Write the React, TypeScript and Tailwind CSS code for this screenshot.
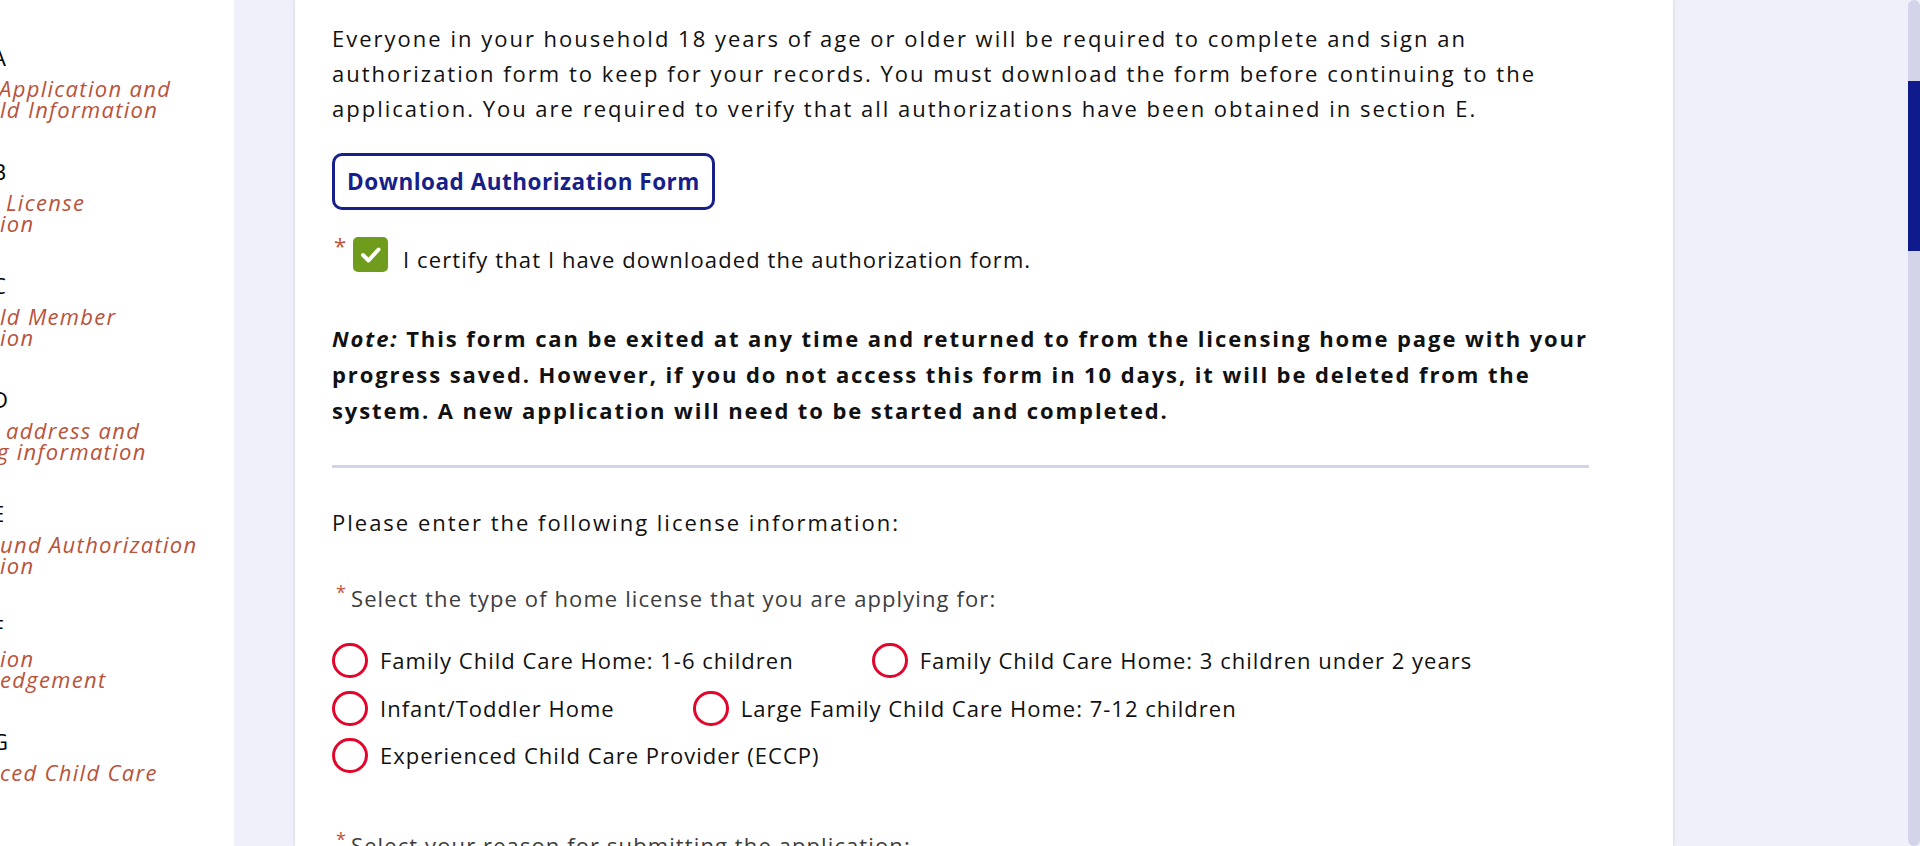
const sections = [
  { letter: "A", lines: [{ t: "Application and", c: "-ml-[1px]" }, { t: "ld Information", c: "ml-0" }] },
  { letter: "B", lines: [{ t: "License", c: "pl-[6px]" }, { t: "ion", c: "ml-0" }] },
  { letter: "C", lines: [{ t: "ld Member", c: "ml-0" }, { t: "ion", c: "ml-0" }] },
  { letter: "D", lines: [{ t: "address and", c: "pl-[6px]" }, { t: "g information", c: "-ml-[3px]" }] },
  { letter: "E", lines: [{ t: "und Authorization", c: "ml-0" }, { t: "ion", c: "ml-0" }] },
  { letter: "F", lines: [{ t: "ion", c: "ml-0" }, { t: "edgement", c: "ml-0" }] },
  { letter: "G", lines: [{ t: "ced Child Care", c: "ml-0" }] },
]

const licenseTypes = [
  "Family Child Care Home: 1-6 children",
  "Family Child Care Home: 3 children under 2 years",
  "Infant/Toddler Home",
  "Large Family Child Care Home: 7-12 children",
  "Experienced Child Care Provider (ECCP)",
]

function Radio({ label }: { label: string }) {
  return (
    <label className="flex items-center gap-[12px] h-[35px] whitespace-nowrap">
      <span className="w-[36px] h-[35px] rounded-full border-[3px] border-[#e3062c] bg-white shrink-0" />
      <span className="text-[#111]">{label}</span>
    </label>
  )
}

export default function App() {
  return (
    <div className="flex h-[846px] w-full overflow-hidden bg-[#eff0f9] font-['Open_Sans',sans-serif] text-[22px] text-[#111]">
      {/* Section nav */}
      <aside className="w-[234px] shrink-0 bg-white overflow-hidden pt-[46px] tracking-[1.3px]">
        {sections.map((s) => (
          <div key={s.letter} className="h-[114px]">
            <div className="leading-[22px] text-black -ml-[8px]">{s.letter}</div>
            <div className="mt-[10px] italic leading-[20.7px] text-[#b8533c] whitespace-nowrap">
              {s.lines.map((l) => (
                <div key={l.t} className={l.c}>{l.t}</div>
              ))}
            </div>
          </div>
        ))}
      </aside>

      {/* Main */}
      <main className="flex-1 pl-[61px]">
        <div className="w-[1378px] h-full bg-white shadow-[0_0_3px_rgba(20,20,80,0.18)] pl-[37px] pt-[21px]">
          <div className="w-[1257px]">
            <p className="leading-[35px] tracking-[2px] whitespace-nowrap">
              Everyone in your household 18 years of age or older will be required to complete and sign an<br />
              authorization form to keep for your records. You must download the form before continuing to the<br />
              application. You are required to verify that all authorizations have been obtained in section E.
            </p>

            <button className="mt-[27px] h-[57px] w-[383px] rounded-[10px] border-[3px] border-[#161f8a] text-[#161f8a] text-[22.5px] tracking-[0.5px] font-bold flex items-center justify-center">
              Download Authorization Form
            </button>

            <div className="mt-[27px] flex items-start tracking-[1.1px]">
              <span className="text-[#c0533a] text-[22px] leading-[22px] -mt-[3px] ml-[2px] w-[19px]">*</span>
              <span className="w-[35px] h-[35px] rounded-[5px] bg-[#6f9c1c] flex items-center justify-center shrink-0">
                <svg width="35" height="35" viewBox="0 0 35 35" fill="none">
                  <polyline points="10,18 15.5,23.5 25.5,12.5" stroke="white" strokeWidth="4" strokeLinecap="round" strokeLinejoin="round" />
                </svg>
              </span>
              <span className="ml-[15px] mt-[5px] leading-[35px] whitespace-nowrap">I certify that I have downloaded the authorization form.</span>
            </div>

            <p className="mt-[43px] leading-[36px] font-bold tracking-[1.9px] whitespace-nowrap">
              <em>Note:</em> This form can be exited at any time and returned to from the licensing home page with your<br />
              progress saved. However, if you do not access this form in 10 days, it will be deleted from the<br />
              system. A new application will need to be started and completed.
            </p>

            <hr className="mt-[37px] border-0 h-[3px] bg-[#d2d3ea]" />

            <p className="mt-[37px] leading-[35px] tracking-[2px]">Please enter the following license information:</p>

            <div className="mt-[41px] flex items-start leading-[35px] text-[#3d3d3d] tracking-[1.1px]">
              <span className="text-[#c0533a] text-[18px] leading-none mt-[2px] ml-[4px] w-[15px]">*</span>
              <span>Select the type of home license that you are applying for:</span>
            </div>

            <div className="mt-[27px] flex flex-wrap gap-x-[78px] gap-y-[12.5px] tracking-[1px]">
              {licenseTypes.map((t) => (
                <Radio key={t} label={t} />
              ))}
            </div>

            <div className="mt-[55px] flex items-start leading-[35px] text-[#3d3d3d] tracking-[1.1px]">
              <span className="text-[#c0533a] text-[18px] leading-none mt-[2px] ml-[4px] w-[15px]">*</span>
              <span>Select your reason for submitting the application:</span>
            </div>
          </div>
        </div>
      </main>

      {/* Scrollbar */}
      <div className="w-[12px] shrink-0 bg-[#d3d4ea] rounded-full overflow-hidden">
        <div className="mt-[81px] h-[170px] bg-[#0f1a8c]" />
      </div>
    </div>
  )
}
